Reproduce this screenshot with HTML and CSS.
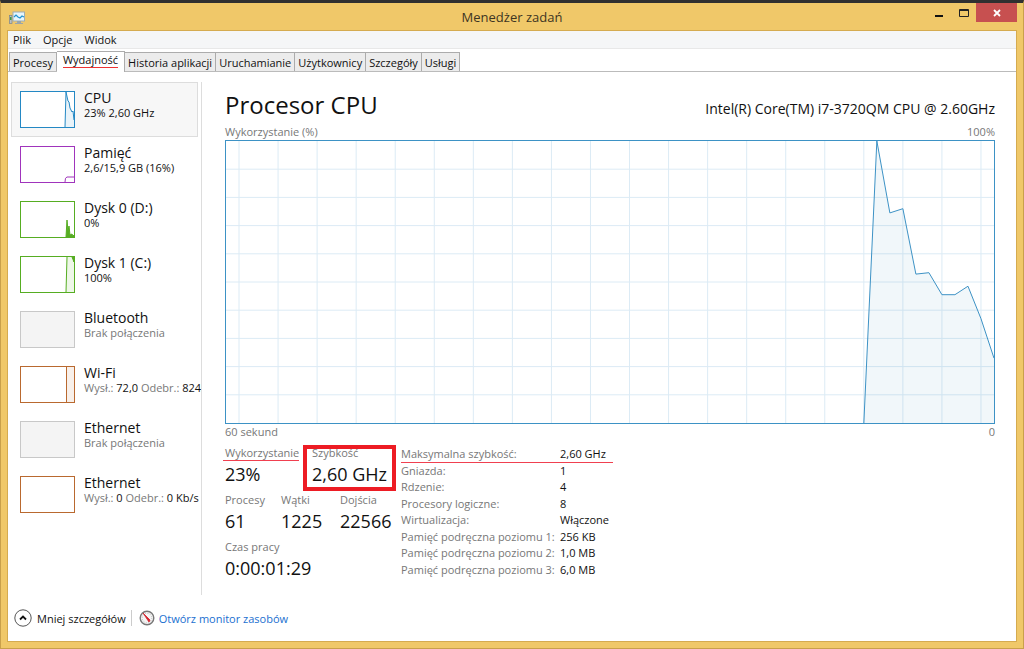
FILE: index.html
```html
<!DOCTYPE html>
<html lang="pl">
<head>
  <meta charset="UTF-8">
  <meta name="viewport" content="width=device-width, initial-scale=1.0">
  <title>Menedżer zadań</title>
  <link rel="stylesheet" href="styles.css">
</head>
<body>
  <div class="window">
    <header class="titlebar">
      <svg class="app-icon" width="16" height="14" viewBox="0 0 16 14">
        <rect x="0.5" y="4.500" width="2.500" height="8" fill="#b9bfc2" stroke="#7c8488" stroke-width="0.700"/>
        <rect x="1" y="6" width="1.500" height="3" fill="#3f9a45"/>
        <rect x="4" y="1" width="11.500" height="9" fill="#e6f5fb" stroke="#9eacb3"/>
        <path d="M5 6l2-2 2 2 2 1 2-2 2 1" fill="none" stroke="#2193d1" stroke-width="1.200"/>
        <path d="M8 10h4v2h2v1H6v-1h2z" fill="#9ba5aa"/>
      </svg>
      <h1>Menedżer zadań</h1>
      <div class="window-buttons">
        <button aria-label="Minimalizuj"><svg width="8" height="12" viewBox="0 0 8 12"><path d="M0 9h8" stroke="#111" stroke-width="2"/></svg></button>
        <button aria-label="Maksymalizuj"><svg width="10" height="8" viewBox="0 0 10 8"><path d="M0.500 0.500h9v7h-9zM0 1.500h10" fill="none" stroke="#222"/></svg></button>
        <button class="close" aria-label="Zamknij"><svg width="8" height="8" viewBox="0 0 8 8"><path d="M1 1l6 6M7 1l-6 6" stroke="#fff" stroke-width="1.800"/></svg></button>
      </div>
    </header>

    <div class="client">
      <nav class="menu">
        <button>Plik</button>
        <button>Opcje</button>
        <button>Widok</button>
      </nav>

      <div class="tabs" role="tablist">
        <button role="tab">Procesy</button>
        <button role="tab" class="active" aria-selected="true"><span>Wydajność</span></button>
        <button role="tab">Historia aplikacji</button>
        <button role="tab">Uruchamianie</button>
        <button role="tab">Użytkownicy</button>
        <button role="tab">Szczegóły</button>
        <button role="tab">Usługi</button>
      </div>

      <main class="content">
        <aside class="sidebar">
          <button class="device selected">
            <svg class="thumb cpu" viewBox="0 0 53 35"><path class="area" d="M44 35L45 0l2 9 1 1 1 6 2 3h1l1 9v7z"/><path d="M44 35L45 0l2 9 1 1 1 6 2 4 1-1 1 9"/></svg>
            <span class="info"><span class="name">CPU</span><span class="value">23% 2,60 GHz</span></span>
          </button>
          <button class="device">
            <svg class="thumb memory" viewBox="0 0 53 35"><path d="M44 35q0-5 2-5h7"/></svg>
            <span class="info"><span class="name">Pamięć</span><span class="value">2,6/15,9 GB (16%)</span></span>
          </button>
          <button class="device">
            <svg class="thumb disk" viewBox="0 0 53 35"><path class="solid" d="M45 35l1-17 1 11 1-5 1 9 2-1 1 2 1-1v2z"/></svg>
            <span class="info"><span class="name">Dysk 0 (D:)</span><span class="value">0%</span></span>
          </button>
          <button class="device">
            <svg class="thumb disk" viewBox="0 0 53 35"><path class="area" d="M45 35L46 0h7v35z"/><path d="M45 35L46 0"/><path class="solid" d="M51 0h2v5z"/></svg>
            <span class="info"><span class="name">Dysk 1 (C:)</span><span class="value">100%</span></span>
          </button>
          <button class="device">
            <svg class="thumb off" viewBox="0 0 53 35"></svg>
            <span class="info"><span class="name">Bluetooth</span><span class="value muted">Brak połączenia</span></span>
          </button>
          <button class="device">
            <svg class="thumb net" viewBox="0 0 53 35"><path class="area" d="M45 0h8v35h-8z"/><path d="M45.500 0v35"/></svg>
            <span class="info"><span class="name">Wi-Fi</span><span class="value muted">Wysł.: <b>72,0</b> Odebr.: <b>824 Kb/s</b></span></span>
          </button>
          <button class="device">
            <svg class="thumb off" viewBox="0 0 53 35"></svg>
            <span class="info"><span class="name">Ethernet</span><span class="value muted">Brak połączenia</span></span>
          </button>
          <button class="device">
            <svg class="thumb net" viewBox="0 0 53 35"></svg>
            <span class="info"><span class="name">Ethernet</span><span class="value muted">Wysł.: <b>0</b> Odebr.: <b>0 Kb/s</b></span></span>
          </button>
        </aside>

        <section class="details">
          <div class="heading">
            <h2>Procesor CPU</h2>
            <p>Intel(R) Core(TM) i7-3720QM CPU @ 2.60GHz</p>
          </div>
          <div class="scale"><span>Wykorzystanie (%)</span><span>100%</span></div>
          <!-- one unit across = one sample, one unit down = one percent -->
          <svg class="chart" viewBox="0 0 59 100" preserveAspectRatio="none">
            <path class="grid" d="M1 0V100M4 0V100M7 0V100M10 0V100M13 0V100M16 0V100M19 0V100M22 0V100M25 0V100M28 0V100M31 0V100M34 0V100M37 0V100M40 0V100M43 0V100M46 0V100M49 0V100M52 0V100M55 0V100M58 0V100M0 10H59M0 20H59M0 30H59M0 40H59M0 50H59M0 60H59M0 70H59M0 80H59M0 90H59"/>
            <path class="fill" d="M49 100L50 0L51 25.500L52 24L53 47.200L54 46.700L55 54.500H56L57 51.500L58 63L59 77V100z"/>
            <path class="line" d="M49 100L50 0L51 25.500L52 24L53 47.200L54 46.700L55 54.500H56L57 51.500L58 63L59 77"/>
          </svg>
          <div class="scale"><span>60 sekund</span><span>0</span></div>

          <div class="stats">
            <div class="counters">
              <dl class="row">
                <div class="usage"><dt>Wykorzystanie</dt><dd>23%</dd></div>
                <div class="speed"><dt>Szybkość</dt><dd>2,60 GHz</dd></div>
              </dl>
              <dl class="row three">
                <div><dt>Procesy</dt><dd>61</dd></div>
                <div><dt>Wątki</dt><dd>1225</dd></div>
                <div><dt>Dojścia</dt><dd>22566</dd></div>
              </dl>
              <dl class="row">
                <div><dt>Czas pracy</dt><dd>0:00:01:29</dd></div>
              </dl>
            </div>
            <table class="specs">
              <tr class="marked"><th>Maksymalna szybkość:</th><td>2,60 GHz</td></tr>
              <tr><th>Gniazda:</th><td>1</td></tr>
              <tr><th>Rdzenie:</th><td>4</td></tr>
              <tr><th>Procesory logiczne:</th><td>8</td></tr>
              <tr><th>Wirtualizacja:</th><td>Włączone</td></tr>
              <tr><th>Pamięć podręczna poziomu 1:</th><td>256 KB</td></tr>
              <tr><th>Pamięć podręczna poziomu 2:</th><td>1,0 MB</td></tr>
              <tr><th>Pamięć podręczna poziomu 3:</th><td>6,0 MB</td></tr>
            </table>
          </div>
        </section>
      </main>

      <footer class="footer">
        <button class="fewer">
          <svg width="18" height="18" viewBox="0 0 18 18"><circle cx="9" cy="9" r="8.200" fill="#fff" stroke="#555"/><path d="M6 10.500l3-3 3 3" fill="none" stroke="#111" stroke-width="1.800"/></svg>
          Mniej szczegółów
        </button>
        <a href="#">
          <svg width="16" height="16" viewBox="0 0 16 16"><circle cx="8" cy="8" r="6.800" fill="#f4f4f4" stroke="#777" stroke-width="1.400"/><circle cx="8" cy="8" r="4.800" fill="none" stroke="#bbb" stroke-dasharray="1 1.500"/><path d="M4 3l7 7-1 2z" fill="#d3202a" stroke="#d3202a" stroke-width="0.800"/></svg>
          Otwórz monitor zasobów
        </a>
      </footer>
    </div>
  </div>
</body>
</html>
```
FILE: styles.css
```css
* {
  box-sizing: border-box;
}
body {
  margin: 0;
  font-family: "Open Sans", "Noto Sans", sans-serif;
  font-size: 11px;
  color: #111;
}
button {
  font: inherit;
  color: inherit;
  background: none;
  border: 0;
  padding: 0;
}
h1, h2, p, dl, dd {
  margin: 0;
  font-weight: normal;
}
.window {
  display: flex;
  flex-direction: column;
  min-height: 100vh;
  padding: 0 6px 6px;
  background: #f0c869;
  border: 1px solid #c9a04b;
  border-top: 3px solid #303030;
}

/* Title bar */
.titlebar {
  display: grid;
  grid-template-columns: 1fr auto 1fr;
  height: 27px;
}
.app-icon {
  margin: 8px 2px;
}
.titlebar h1 {
  font-size: 13px;
  line-height: 28px;
  color: #3d3523;
}
.window-buttons {
  display: flex;
  justify-content: flex-end;
}
.window-buttons button {
  display: flex;
  align-items: center;
  justify-content: center;
  width: 25px;
  height: 19px;
}
.window-buttons .close {
  width: 41px;
  background: #c75050;
}

/* Client area */
.client {
  flex: 1;
  display: flex;
  flex-direction: column;
  background: #fff;
  border: 1px solid #d5ab50;
}
.menu {
  display: flex;
  gap: 12px;
  height: 18px;
  padding-left: 5px;
  background: #f5f6f7;
  border-bottom: 1px solid #e8e8e8;
}
.tabs {
  display: flex;
  align-items: flex-end;
  height: 23px;
  padding-left: 1px;
  border-bottom: 1px solid #bbb;
}
.tabs button {
  height: 19px;
  padding: 0 3px;
  background: #ececec;
  border: 1px solid #acacac;
  border-bottom: 0;
  white-space: nowrap;
}
.tabs button + button {
  border-left-width: 0;
}
.tabs .active {
  height: 21px;
  margin-bottom: -1px;
  padding: 0 6px 3px;
  background: #fff;
}
.tabs .active span {
  display: block;
  line-height: 14px;
  border-bottom: 1px solid #e33;
}
.content {
  flex: 1;
  display: flex;
  padding: 10px 21px 0 3px;
}

/* Device list */
.sidebar {
  flex: none;
  width: 191px;
  overflow: hidden;
  border-right: 1px solid #ddd;
}
.device {
  display: flex;
  gap: 9px;
  width: 100%;
  height: 55px;
  padding: 8px 0 0 8px;
  border: 1px solid transparent;
  text-align: left;
}
.selected {
  width: 187px;
  background: #f7f7f7;
  border-color: #ddd;
}
.thumb {
  flex: none;
  width: 55px;
  height: 37px;
  background: #fff;
  border: 1px solid currentColor;
  fill: none;
  stroke: currentColor;
}
.thumb .area {
  fill: currentColor;
  fill-opacity: 0.1;
  stroke: none;
}
.thumb .solid {
  fill: currentColor;
}
.cpu {
  color: #2488c4;
}
.memory {
  color: #a034bc;
}
.disk {
  color: #56ad22;
}
.net {
  color: #b9692f;
}
.off {
  color: #c8c8c8;
  background: #f4f4f4;
}
.info {
  margin-top: -2px;
  white-space: nowrap;
}
.name, .value {
  display: block;
}
.name {
  font-size: 14px;
  line-height: 17px;
}
.value {
  line-height: 14px;
}
.value b {
  font-weight: normal;
  color: #111;
}
.muted {
  color: #777;
}

/* CPU details */
.details {
  flex: 1;
  min-width: 0;
  padding-left: 23px;
}
.heading {
  display: flex;
  align-items: flex-end;
  justify-content: space-between;
  height: 42px;
}
.heading h2 {
  font-size: 24px;
  line-height: 38px;
}
.heading p {
  font-size: 14px;
  line-height: 30px;
}
.scale {
  display: flex;
  justify-content: space-between;
  line-height: 16px;
  color: #777;
}
.chart {
  display: block;
  width: 100%;
  height: 284px;
  border: 1px solid #3d92c5;
}
.chart path {
  fill: none;
  vector-effect: non-scaling-stroke;
}
.chart .grid {
  stroke: #dcebf5;
}
.chart .fill {
  fill: #1170aa;
  fill-opacity: 0.06;
}
.chart .line {
  stroke: #3d92c5;
}
.stats {
  display: flex;
  padding-top: 6px;
}
.counters {
  width: 176px;
}
.row {
  display: flex;
  align-items: flex-start;
  height: 47px;
}
.row dt {
  line-height: 14px;
  color: #777;
}
.row dd {
  font-size: 18px;
  line-height: 28px;
  white-space: nowrap;
}
.usage {
  width: 79px;
}
.usage dt {
  margin-left: -2px;
  padding-left: 2px;
  width: 76px;
  border-bottom: 1px solid #f04050;
}
.usage dd {
  line-height: 26px;
}
.speed {
  height: 44px;
  padding: 0 8px;
  outline: 4px solid #ed1c24;
  outline-offset: -3px;
}
.three {
  display: grid;
  grid-template-columns: 56px 59px 1fr;
}
.specs {
  border-collapse: collapse;
  height: 132px;
}
.specs th, .specs td {
  height: 16px;
  padding: 0;
  line-height: 14px;
  font-weight: normal;
  text-align: left;
  white-space: nowrap;
}
.specs th {
  width: 159px;
  color: #777;
}
.specs td {
  width: 53px;
}
.marked {
  border-bottom: 1px solid #f04050;
}

/* Footer */
.footer {
  display: flex;
  align-items: center;
  height: 46px;
  padding-left: 6px;
}
.footer button, .footer a {
  display: flex;
  align-items: center;
  gap: 5px;
}
.footer a {
  gap: 4px;
  margin-left: 5px;
  padding-left: 7px;
  border-left: 1px solid #ccc;
  color: #1a6fd0;
  text-decoration: none;
}
```
